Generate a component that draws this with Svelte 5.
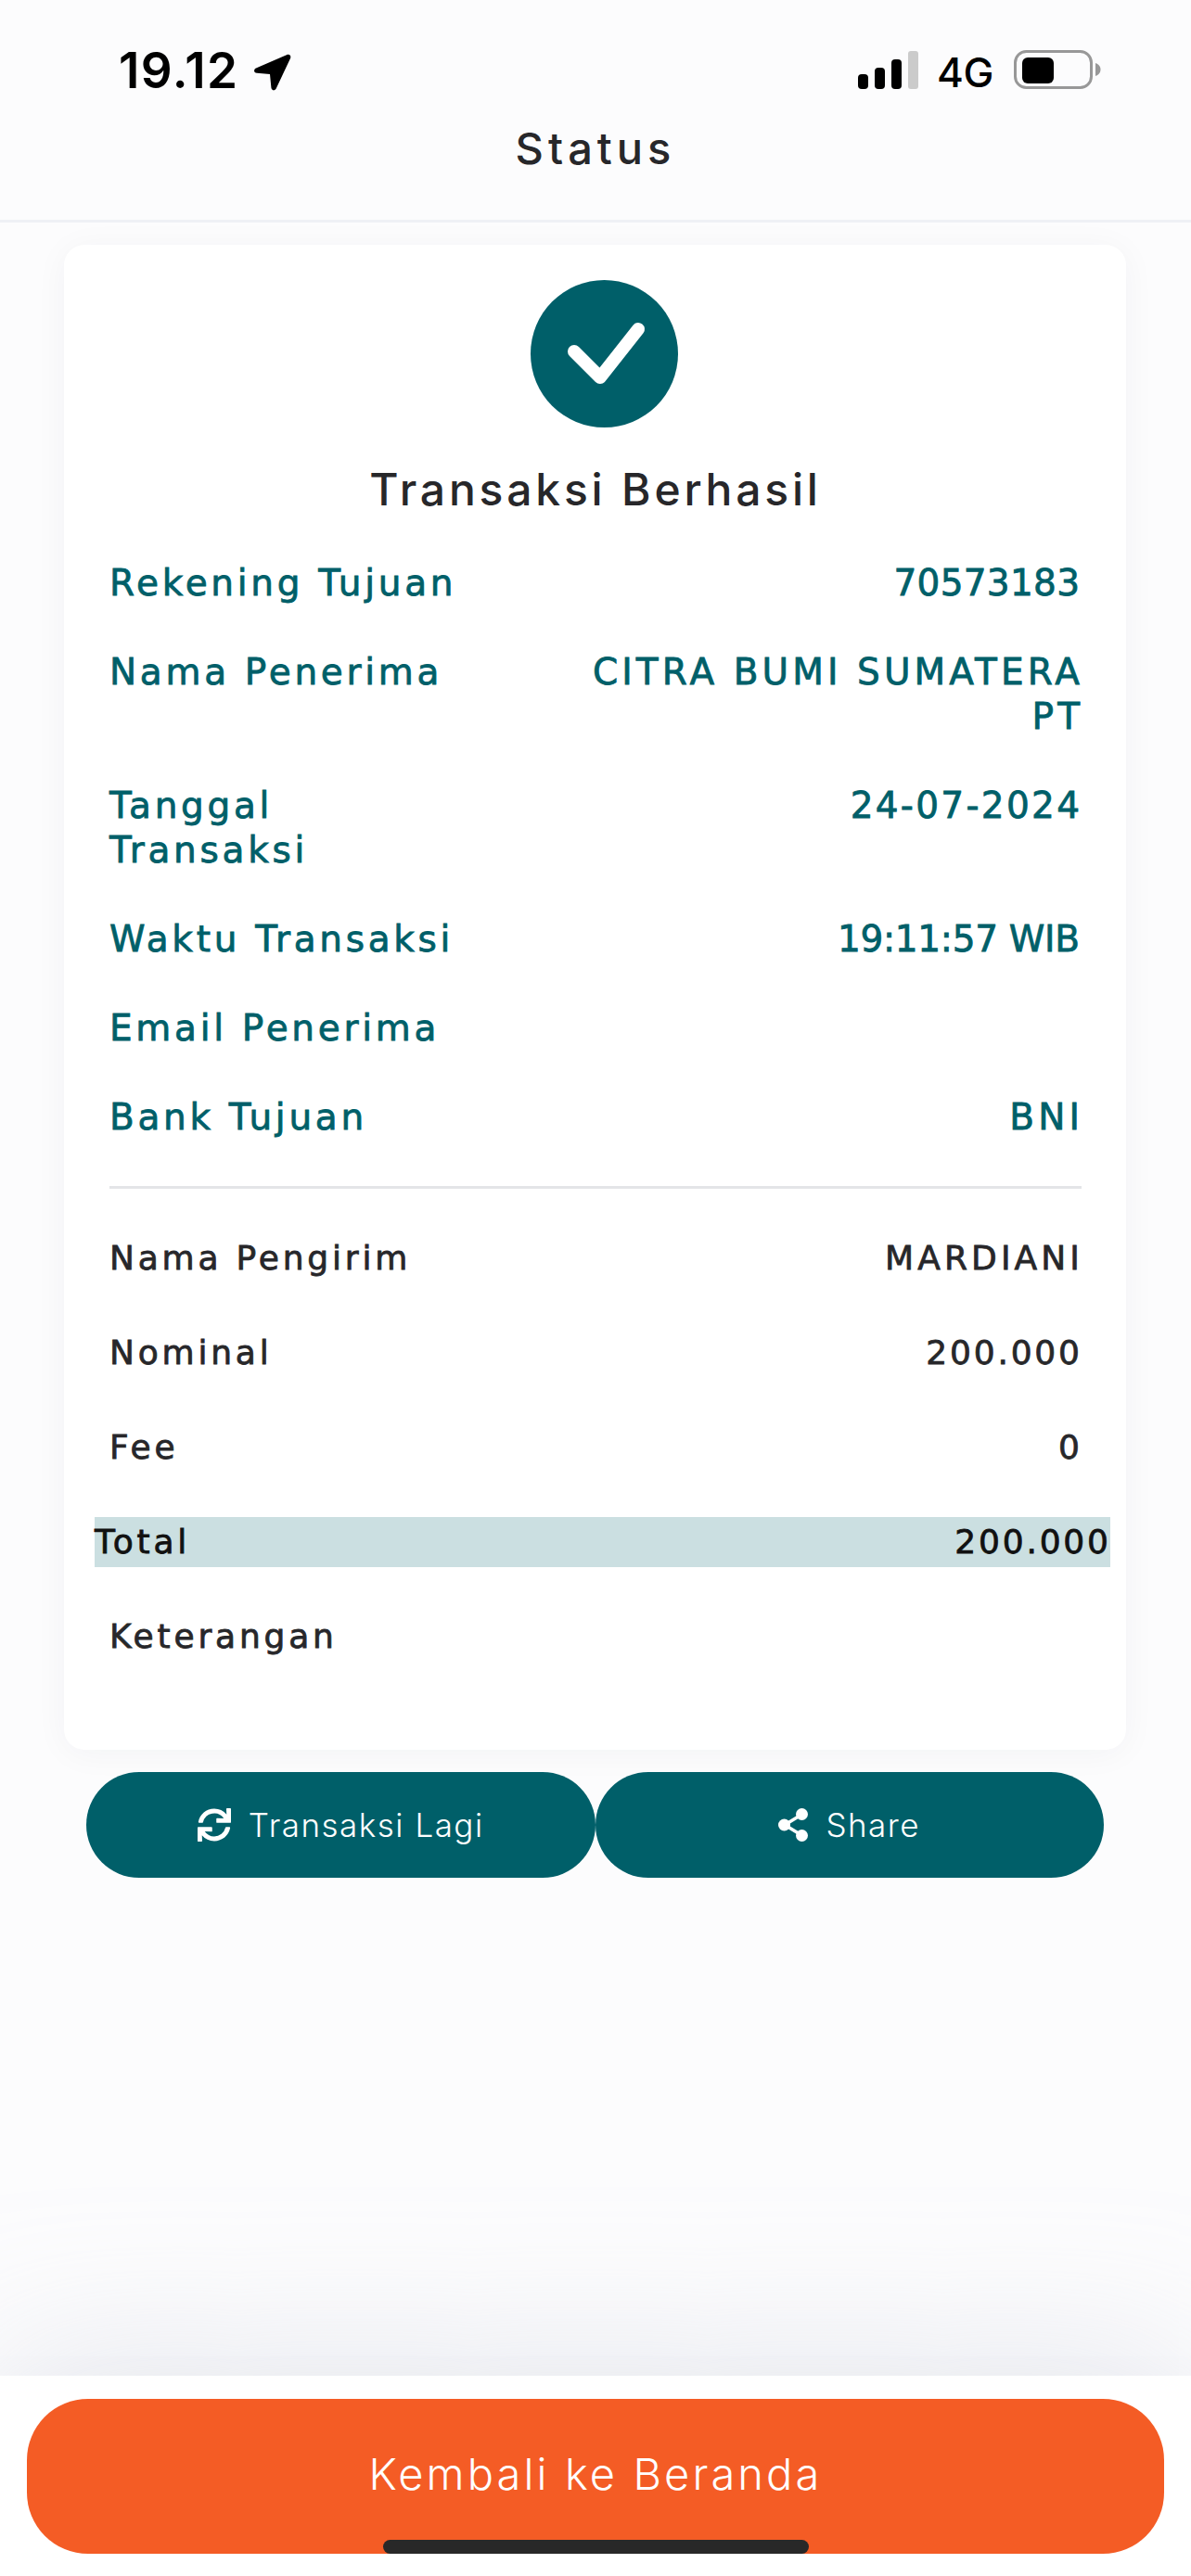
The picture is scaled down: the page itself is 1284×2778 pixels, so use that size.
<script>
  const recipient = [
    { label: "Rekening Tujuan", value: "70573183", spacing: 0.3 },
    { label: "Nama Penerima", value: "CITRA BUMI SUMATERA PT", spacing: 4.1 },
    { label: "Tanggal Transaksi", value: "24-07-2024", spacing: 2.3 },
    { label: "Waktu Transaksi", value: "19:11:57 WIB", spacing: -0.3 },
    { label: "Email Penerima", value: "" },
    { label: "Bank Tujuan", value: "BNI", spacing: 4.1 }
  ];
  const summary = [
    { label: "Nama Pengirim", value: "MARDIANI", spacing: 4.1 },
    { label: "Nominal", value: "200.000", spacing: 2.8 },
    { label: "Fee", value: "0", spacing: 2.8 },
    { label: "Total", value: "200.000", spacing: 2.8, total: true },
    { label: "Keterangan", value: "" }
  ];

  const spacingStyle = (row) =>
    row.spacing === undefined ? null : `letter-spacing: ${row.spacing}px; margin-right: ${2 - row.spacing}px`;
</script>

<div class="page">
  <header class="top">
    <div class="statusbar">
      <div class="clock">
        <span class="time">19.12</span>
        <svg class="arrow" viewBox="0 0 42 40" aria-hidden="true">
          <path d="M37.500 1 4 15.500c-3 1.400-2.400 5 1 5.300l14 1.200 1.400 14.500c.4 3.300 4 3.800 5.300 1L41 5c1.200-2.800-1-5-3.500-4z" />
        </svg>
      </div>
      <div class="indicators">
        <svg class="signal" viewBox="0 0 65 41" aria-hidden="true">
          <rect x="0" y="25" width="11" height="16" rx="4" />
          <rect x="18" y="18" width="11" height="23" rx="4" />
          <rect x="36" y="9" width="11" height="32" rx="4" />
          <rect x="54" y="0" width="11" height="41" rx="3" fill="#cbcbcb" />
        </svg>
        <span class="network">4G</span>
        <svg class="battery" viewBox="0 0 94 42" aria-hidden="true">
          <rect x="1.500" y="1.500" width="82" height="39" rx="12" fill="none" stroke="#989898" stroke-width="3" />
          <rect x="9" y="8" width="34" height="28" rx="6" />
          <path d="M88 14c3 .8 5.500 3.500 5.500 7s-2.500 6.200-5.500 7z" fill="#989898" />
        </svg>
      </div>
    </div>
    <h1>Status</h1>
  </header>

  <main>
    <section class="card">
      <svg class="success" viewBox="0 0 159 159" aria-hidden="true">
        <circle cx="79.500" cy="79.500" r="79.500" fill="#005f69" />
        <path d="M47 77 75 105 116 53" fill="none" stroke="#fff" stroke-width="14" stroke-linecap="round" stroke-linejoin="round" />
      </svg>
      <h2>Transaksi Berhasil</h2>

      <div class="rows teal">
        {#each recipient as row}
          <div class="row">
            <span class="label">{row.label}</span>
            <span class="value" style={spacingStyle(row)}>{row.value}</span>
          </div>
        {/each}
      </div>

      <hr />

      <div class="rows dark">
        {#each summary as row}
          <div class="row" class:total={row.total}>
            <span class="label">{row.label}</span>
            <span class="value" style={spacingStyle(row)}>{row.value}</span>
          </div>
        {/each}
      </div>
    </section>

    <div class="actions">
      <button type="button">
        <svg class="icon" viewBox="0 0 512 512" aria-hidden="true">
          <path d="M440.650 12.570l4 82.770A247.160 247.160 0 0 0 255.830 8C134.730 8 33.910 94.920 12.290 209.820A12 12 0 0 0 24.090 224h49.050a12 12 0 0 0 11.670-9.260 175.910 175.910 0 0 1 317-56.940l-101.460-4.860a12 12 0 0 0-12.570 12v47.410a12 12 0 0 0 12 12H500a12 12 0 0 0 12-12V12a12 12 0 0 0-12-12h-47.370a12 12 0 0 0-11.980 12.570zM255.830 432a175.610 175.610 0 0 1-146-77.800l101.800 4.870a12 12 0 0 0 12.570-12v-47.400a12 12 0 0 0-12-12H12a12 12 0 0 0-12 12V500a12 12 0 0 0 12 12h47.350a12 12 0 0 0 12-12.600l-4.150-82.570A247.170 247.170 0 0 0 255.830 504c121.110 0 221.930-86.920 243.550-201.820a12 12 0 0 0-11.800-14.180h-49.050a12 12 0 0 0-11.670 9.260A175.860 175.860 0 0 1 255.830 432z" />
        </svg>
        Transaksi Lagi
      </button>
      <button type="button">
        <svg class="icon share" viewBox="0 0 32 36" aria-hidden="true">
          <path d="M25 7 7 18l18 11" fill="none" stroke="#fff" stroke-width="3.500" />
          <circle cx="6.500" cy="18" r="6.500" />
          <circle cx="25.500" cy="6.500" r="6.500" />
          <circle cx="25.500" cy="29.500" r="6.500" />
        </svg>
        Share
      </button>
    </div>
  </main>

  <footer>
    <button type="button" class="home">Kembali ke Beranda</button>
    <div class="home-indicator"></div>
  </footer>
</div>

<style>
  :global(body) {
    margin: 0;
    background: #fcfcfd;
  }

  .page {
    height: 2778px;
    display: flex;
    flex-direction: column;
    font-family: Inter, "Noto Sans", sans-serif;
    color: #27272a;
    background: #fcfcfd;
    overflow: hidden;
  }

  .top {
    flex: none;
    box-sizing: border-box;
    border-bottom: 3px solid #eff1f5;
    height: 240px;
    padding: 54px 97px 0 128px;
    display: flex;
    flex-direction: column;
  }

  .statusbar {
    display: flex;
    justify-content: space-between;
    align-items: flex-start;
    height: 44px;
    color: #000;
  }

  .clock {
    display: flex;
    align-items: center;
    gap: 15px;
    height: 44px;
  }

  .time {
    font-weight: 600;
    font-size: 53px;
    line-height: 44px;
    letter-spacing: 1.400px;
  }

  .arrow {
    width: 42px;
    height: 40px;
    margin-top: 4px;
  }

  .indicators {
    display: flex;
    align-items: flex-start;
    height: 44px;
  }

  .signal {
    width: 65px;
    height: 41px;
    margin-top: 1px;
  }

  .network {
    margin-left: 20px;
    width: 61px;
    font-weight: 500;
    font-size: 44px;
    line-height: 44px;
    margin-top: 2px;
    letter-spacing: -0.500px;
  }

  .battery {
    width: 94px;
    height: 42px;
    margin-left: 22px;
  }

  h1 {
    margin: 0 -97px 0 -128px;
    text-align: center;
    font-weight: 500;
    font-size: 47px;
    line-height: 60px;
    letter-spacing: 5px;
    padding-top: 32px;
  }

  main {
    flex: 1;
    padding: 24px 70px 0 69px;
  }

  .card {
    display: flex;
    flex-direction: column;
    height: 1623px;
    box-sizing: border-box;
    padding: 38px 48px 0 49px;
    background: #fff;
    border-radius: 22px;
    box-shadow: 0 4px 36px rgba(30, 40, 60, 0.045);
  }

  .success {
    width: 159px;
    height: 159px;
    flex: none;
    align-self: center;
    margin-left: 19px;
  }

  h2 {
    margin: 37px 0 47px;
    text-align: center;
    font-weight: 500;
    font-size: 48px;
    line-height: 60px;
    letter-spacing: 3.800px;
  }

  .rows {
    display: flex;
    flex-direction: column;
    gap: 48px;
    font-family: "DejaVu Sans", Inter, sans-serif;
    -webkit-text-stroke: 0.8px currentColor;
  }

  .teal {
    color: #005f69;
    font-size: 39px;
    line-height: 48px;
    letter-spacing: 3.700px;
  }

  .dark {
    color: #27272a;
    line-height: 54px;
    font-size: 36px;
    letter-spacing: 3.800px;
  }

  .row {
    display: grid;
    grid-template-columns: 380px 1fr;
    column-gap: 90px;
  }

  .value {
    text-align: right;
  }

  .total {
    margin: 0 -31px 0 -16px;
    background: #cbdfe1;
    color: #111;
  }

  hr {
    width: 100%;
    height: 3px;
    margin: 50px 0 48px;
    border: 0;
    background: #e4e5e8;
    flex: none;
  }

  .actions {
    display: flex;
    margin: 24px 24px 0;
  }

  .actions button {
    flex: 1;
    height: 114px;
    display: flex;
    align-items: center;
    justify-content: center;
    gap: 19px;
    border: 0;
    border-radius: 57px;
    background: #005f69;
    color: #fff;
    font-family: inherit;
    font-size: 35px;
    font-weight: 350;
    letter-spacing: 1.500px;
  }

  .icon {
    width: 36px;
    height: 36px;
    fill: #fff;
    flex: none;
  }

  .share {
    width: 32px;
  }

  footer {
    position: relative;
    flex: none;
    height: 216px;
    box-sizing: border-box;
    padding: 25px 29px 0;
    background: #fff;
    box-shadow: 0 0 170px rgba(205, 208, 222, 0.6);
  }

  .home {
    display: block;
    width: 100%;
    height: 167px;
    border: 0;
    border-radius: 66px;
    background: #f45c25;
    color: #fff;
    font-family: inherit;
    font-size: 47px;
    font-weight: 300;
    letter-spacing: 3.100px;
    padding-bottom: 7px;
  }

  .home-indicator {
    position: absolute;
    left: 413px;
    top: 177px;
    width: 459px;
    height: 15px;
    border-radius: 8px;
    background: #282828;
  }
</style>
